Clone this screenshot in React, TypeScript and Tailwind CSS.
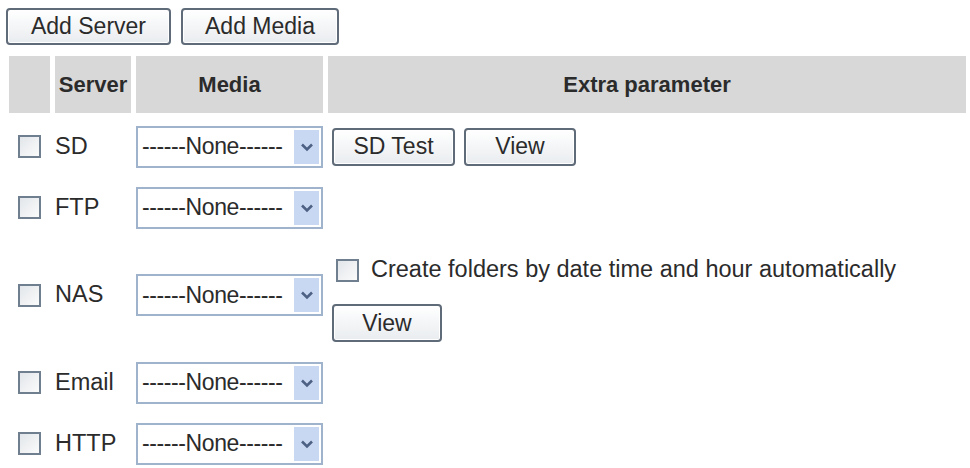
import { ReactNode } from 'react';

type Row = {
    name: string;
    extra?: 'sd' | 'nas';
};

const rows: Row[] = [
    { name: 'SD', extra: 'sd' },
    { name: 'FTP' },
    { name: 'NAS', extra: 'nas' },
    { name: 'Email' },
    { name: 'HTTP' }
];

const Button = ({ children, className = '' }: { children: ReactNode; className?: string }) => (
    <button
        className={`h-[37px] rounded-[4px] border-2 border-[#5f6b78] bg-gradient-to-b from-white to-[#e9ecef] text-[23px] leading-none text-[#2b2b2b] shadow-[inset_0_0_0_1px_#ffffff] ${className}`}
    >
        {children}
    </button>
);

const CheckBox = () => (
    <span className="inline-block w-[23px] h-[23px] border-2 border-[#6f7f8f] bg-gradient-to-br from-[#e2e6ea] to-[#fbfbfb] shrink-0" />
);

const Select = () => (
    <div className="w-[187px] h-[42px] border-2 border-[#9fb4cc] bg-white flex items-center pl-[4px] pr-[2px]">
        <span className="flex-1 text-[23px] leading-none text-[#2b2b2b] tracking-[-0.4px]">------None------</span>
        <span className="w-[25px] h-[34px] bg-[#c9d8f2] flex items-center justify-center">
            <svg width="14" height="10" viewBox="0 0 14 10">
                <path d="M2 2.5 L7 7.5 L12 2.5" fill="none" stroke="#4d6185" strokeWidth="2.6" />
            </svg>
        </span>
    </div>
);

const Extra = ({ kind }: { kind?: Row['extra'] }) => {
    if (kind === 'sd') {
        return (
            <div className="flex items-center gap-[9px]">
                <Button className="w-[123px] h-[38px]">SD Test</Button>
                <Button className="w-[112px] h-[38px]">View</Button>
            </div>
        );
    }
    if (kind === 'nas') {
        return (
            <div className="flex flex-col gap-[12px] py-[10px]">
                <div className="h-[44px] flex items-center gap-[12px] pl-[4px]">
                    <CheckBox />
                    <span className="text-[23.5px] text-[#2b2b2b]">Create folders by date time and hour automatically</span>
                </div>
                <Button className="w-[110px] h-[38px]">View</Button>
            </div>
        );
    }
    return null;
};

export default function App() {
    return (
        <div className="w-[970px] h-[468px] bg-white overflow-hidden font-['Liberation_Sans',Arial,sans-serif] text-[#2b2b2b]">
            <div className="flex gap-[10px] pl-[6px] pt-[8px]">
                <Button className="w-[165px]">Add Server</Button>
                <Button className="w-[158px]">Add Media</Button>
            </div>
            <div className="mt-[11px] pl-[9px] pr-[4px] grid grid-cols-[41px_76px_187px_1fr] gap-x-[5px]">
                <div className="h-[57px] mb-[3px] bg-[#d8d8d8]" />
                <div className="h-[57px] mb-[3px] bg-[#d8d8d8] flex items-center justify-center text-[22px] font-bold">
                    Server
                </div>
                <div className="h-[57px] mb-[3px] bg-[#d8d8d8] flex items-center justify-center text-[22px] font-bold">
                    Media
                </div>
                <div className="h-[57px] mb-[3px] bg-[#d8d8d8] flex items-center justify-center text-[22px] font-bold">
                    Extra parameter
                </div>
                {rows.map((row) => (
                    <div key={row.name} className="contents">
                        <div className="min-h-[61px] flex items-center justify-center">
                            <CheckBox />
                        </div>
                        <div className="min-h-[61px] flex items-center text-[23.5px]">{row.name}</div>
                        <div className="min-h-[61px] flex items-center">
                            <Select />
                        </div>
                        <div className="min-h-[61px] flex items-center pl-[4px]">
                            <Extra kind={row.extra} />
                        </div>
                    </div>
                ))}
            </div>
        </div>
    );
}
